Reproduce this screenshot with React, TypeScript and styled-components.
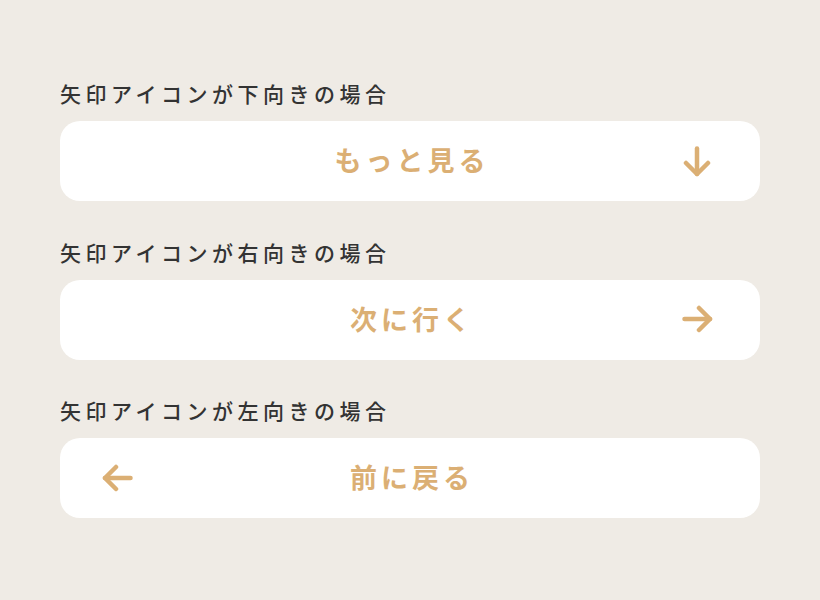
import React from "react";
import styled, { createGlobalStyle } from "styled-components";

const Global = createGlobalStyle`
  html, body { margin: 0; padding: 0; background: #efebe5; }
  body { font-family: "Noto Sans CJK JP", "Noto Sans", sans-serif; }
`;

const Page = styled.main`
  width: 820px;
  min-height: 600px;
  box-sizing: border-box;
  padding: 78px 60px 0;
  display: flex;
  flex-direction: column;
  gap: 35.5px;
`;

const Section = styled.section`
  display: flex;
  flex-direction: column;
  gap: 13px;
`;

const Label = styled.h2`
  margin: 0;
  font-size: 21px;
  line-height: 30px;
  font-weight: 500;
  letter-spacing: 4.5px;
  color: #333333;
`;

type Dir = "down" | "right" | "left";

const Button = styled.a`
  position: relative;
  display: flex;
  align-items: center;
  justify-content: center;
  height: 80px;
  background: #ffffff;
  border-radius: 20px;
  color: #dbaf74;
  font-size: 27px;
  font-weight: 700;
  letter-spacing: 4px;
  text-decoration: none;
  cursor: pointer;
`;

const Text = styled.span`
  margin-right: -4px;
  margin-bottom: 3px;
  line-height: 1;
`;

const IconWrap = styled.span<{ $side: "left" | "right" }>`
  position: absolute;
  top: 50%;
  ${(p) => (p.$side === "right" ? "right: 47px;" : "left: 42px;")}
  width: 32px;
  height: 32px;
  margin-top: -16.5px;
  display: flex;
`;

const rot: Record<Dir, number> = { down: 0, right: -90, left: 90 };

const Arrow = ({ dir }: { dir: Dir }) => (
  <svg
    width="32"
    height="32"
    viewBox="0 0 32 32"
    fill="none"
    stroke="#dbaf74"
    strokeWidth={4.5}
    strokeLinecap="round"
    strokeLinejoin="round"
    style={{ transform: `rotate(${rot[dir]}deg)` }}
  >
    <path d="M16 3.5V29" />
    <path d="M5 18L16 29L27 18" />
  </svg>
);

const items: { label: string; text: string; dir: Dir }[] = [
  { label: "矢印アイコンが下向きの場合", text: "もっと見る", dir: "down" },
  { label: "矢印アイコンが右向きの場合", text: "次に行く", dir: "right" },
  { label: "矢印アイコンが左向きの場合", text: "前に戻る", dir: "left" },
];

export default function App() {
  return (
    <>
      <Global />
      <Page>
        {items.map((it) => {
          const side = it.dir === "left" ? "left" : "right";
          return (
            <Section key={it.text}>
              <Label>{it.label}</Label>
              <Button>
                <IconWrap $side={side}>
                  <Arrow dir={it.dir} />
                </IconWrap>
                <Text>{it.text}</Text>
              </Button>
            </Section>
          );
        })}
      </Page>
    </>
  );
}
